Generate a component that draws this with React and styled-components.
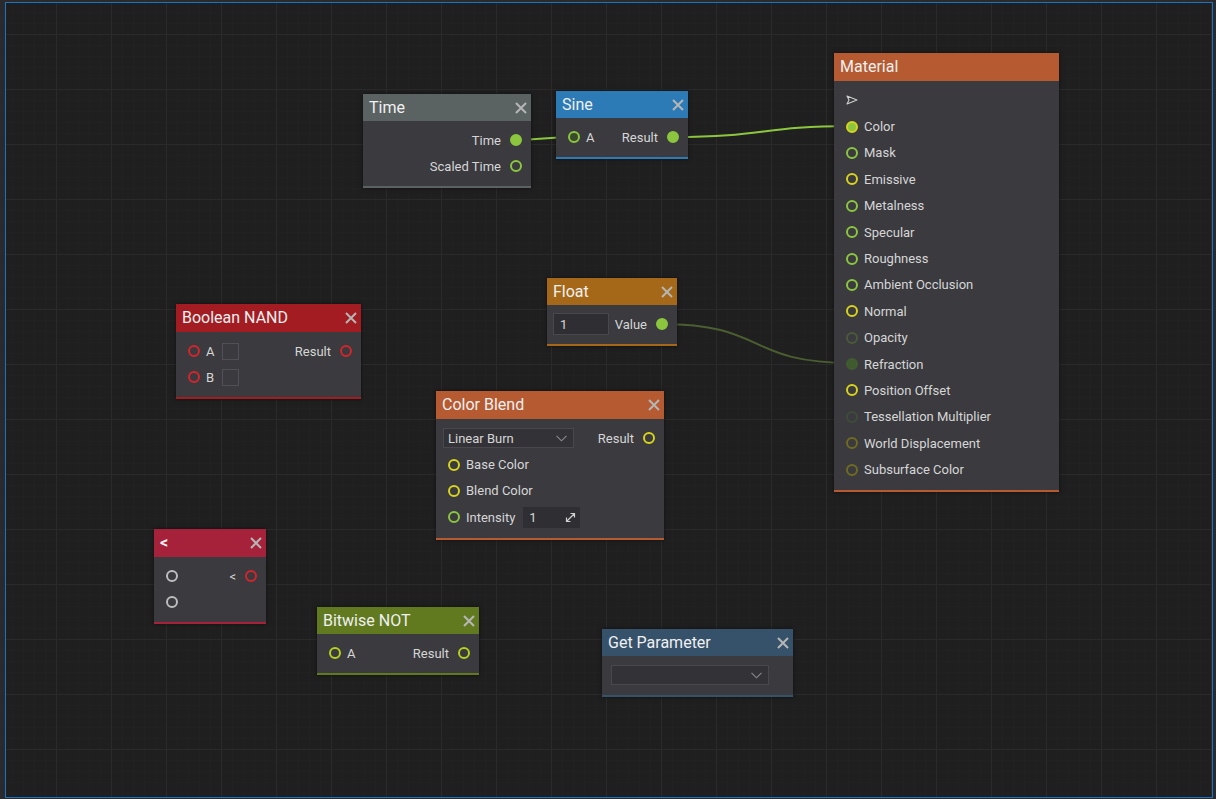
import React from "react";
import styled, { createGlobalStyle } from "styled-components";

const GlobalStyle = createGlobalStyle`
  html, body {
    margin: 0;
    padding: 0;
    background: #2a2a2c;
    font-family: Roboto, "Noto Sans", "Liberation Sans", sans-serif;
  }
  * { box-sizing: border-box; }
`;

const C = {
  green: "#8cc63e",
  yellow: "#d8d41c",
  red: "#d4252b",
  grey: "#bdbdbd",
  dimGreen: "#4a5a3a",
  darkGreen: "#3f5a2c",
  olive: "#6f6b20",
  text: "#d6d6d6",
  body: "#3a3a3f",
};

const Frame = styled.div`
  height: 799px;
  padding: 2px 3px 1px 5px;
`;

const Canvas = styled.div`
  position: relative;
  height: 100%;
  overflow: hidden;
  border: 1px solid #1d72c4;
  background-color: #1f1f20;
  background-image:
    linear-gradient(to right, #2a2a2b 1px, transparent 1px),
    linear-gradient(to bottom, #2a2a2b 1px, transparent 1px),
    linear-gradient(to right, rgba(255, 255, 255, 0.006) 1px, transparent 1px),
    linear-gradient(to bottom, rgba(255, 255, 255, 0.006) 1px, transparent 1px);
  background-size: 55px 55px, 55px 55px, 11px 11px, 11px 11px;
  background-position: 50px 31px, 50px 31px, 50px 31px, 50px 31px;
`;

const Wires = styled.svg`
  position: absolute;
  inset: 0;
  width: 100%;
  height: 100%;
  pointer-events: none;
`;

const Node = styled.div`
  position: absolute;
  left: ${(p) => p.$x}px;
  top: ${(p) => p.$y}px;
  width: ${(p) => p.$w}px;
  background: ${C.body};
  border-bottom: 2px solid ${(p) => p.$accent};
  box-shadow: 0 0 4px rgba(0, 0, 0, 0.55);
`;

const Header = styled.div`
  display: flex;
  align-items: center;
  justify-content: space-between;
  height: ${(p) => p.$h}px;
  padding: 0 4px 0 6px;
  background: ${(p) => p.$accent};
`;

const Title = styled.span`
  font-size: 16px;
  color: #f0f0f0;
  line-height: 1;
  font-weight: ${(p) => (p.$bold ? 700 : 400)};
`;

const CloseButton = styled.button`
  display: flex;
  align-items: center;
  justify-content: center;
  width: 12px;
  height: 12px;
  padding: 0;
  border: 0;
  background: none;
  color: #b6b6b6;
  cursor: pointer;
`;

const Body = styled.div`
  padding: 6px 0 7px;
`;

const Row = styled.div`
  display: flex;
  align-items: center;
  height: ${(p) => p.$h || 26}px;
  padding: 0 9px 0 ${(p) => (p.$pl != null ? p.$pl : 12)}px;
`;

const Port = styled.div`
  display: flex;
  align-items: center;
  gap: ${(p) => (p.$out ? 9 : 6)}px;
  margin-left: ${(p) => (p.$out ? "auto" : 0)};
`;

const Label = styled.span`
  font-size: 13px;
  color: ${C.text};
  white-space: nowrap;
`;

const Socket = styled.span`
  display: inline-block;
  flex: none;
  width: 12px;
  height: 12px;
  border-radius: 50%;
  border: 2px solid ${(p) => p.$ring};
  background: ${(p) => p.$fill || "transparent"};
`;

const Checkbox = styled.span`
  display: inline-block;
  width: 17px;
  height: 17px;
  margin-left: 2px;
  border: 1px solid #505056;
`;

const Select = styled.div`
  display: flex;
  align-items: center;
  justify-content: space-between;
  width: ${(p) => p.$w}px;
  height: 20px;
  padding: 0 6px 0 4px;
  background: #333337;
  border: 1px solid #48484d;
  font-size: 13px;
  color: ${C.text};
`;

const NumberBox = styled.div`
  display: flex;
  align-items: center;
  width: 56px;
  height: 22px;
  padding: 0 6px;
  margin-right: 4px;
  background: #2f2f33;
  border: 1px solid #48484d;
  font-size: 13px;
  color: ${C.text};
`;

const SliderBox = styled.div`
  display: flex;
  align-items: center;
  justify-content: space-between;
  width: 57px;
  height: 21px;
  margin-left: 2px;
  padding: 0 4px 0 6px;
  background: #2f2f33;
  font-size: 13px;
  color: ${C.text};
`;

const XIcon = () => (
  <svg width="12" height="12" viewBox="0 0 12 12">
    <path d="M1 1 L11 11 M11 1 L1 11" stroke="currentColor" strokeWidth="2" />
  </svg>
);

const Chevron = () => (
  <svg width="11" height="7" viewBox="0 0 11 7">
    <path d="M0.5 0.8 L5.5 5.8 L10.5 0.8" fill="none" stroke="#8a8a8e" strokeWidth="1.1" />
  </svg>
);

const ExpandIcon = () => (
  <svg width="11" height="11" viewBox="0 0 11 11" fill="none" stroke="#cfcfcf" strokeWidth="1.2">
    <path d="M1.5 9.5 L9.5 1.5 M5.5 1.5 H9.5 V5.5 M1.5 5.5 V9.5 H5.5" />
  </svg>
);

const PlayIcon = () => (
  <svg width="12" height="10" viewBox="0 0 12 10">
    <path d="M1 1 L11 5 L1 9 L3 5 Z" fill="none" stroke="#cfcfcf" strokeWidth="1.1" strokeLinejoin="round" />
  </svg>
);

const NodeFrame = ({ x, y, w, accent, title, bold, headerH = 27, closable = true, children }) => (
  <Node $x={x} $y={y} $w={w} $accent={accent}>
    <Header $accent={accent} $h={headerH}>
      <Title $bold={bold}>{title}</Title>
      {closable && (
        <CloseButton aria-label="Close">
          <XIcon />
        </CloseButton>
      )}
    </Header>
    <Body>{children}</Body>
  </Node>
);

const Input = ({ label, ring, fill, children }) => (
  <Port>
    <Socket $ring={ring} $fill={fill} />
    {label && <Label>{label}</Label>}
    {children}
  </Port>
);

const Output = ({ label, ring, fill }) => (
  <Port $out>
    {label && <Label>{label}</Label>}
    <Socket $ring={ring} $fill={fill} />
  </Port>
);

const materialInputs = [
  { label: "Color", ring: C.yellow, fill: C.green },
  { label: "Mask", ring: C.green },
  { label: "Emissive", ring: C.yellow },
  { label: "Metalness", ring: C.green },
  { label: "Specular", ring: C.green },
  { label: "Roughness", ring: C.green },
  { label: "Ambient Occlusion", ring: C.green },
  { label: "Normal", ring: C.yellow },
  { label: "Opacity", ring: C.dimGreen },
  { label: "Refraction", ring: "#435a33", fill: C.darkGreen },
  { label: "Position Offset", ring: C.yellow },
  { label: "Tessellation Multiplier", ring: "#3f4c3a" },
  { label: "World Displacement", ring: C.olive },
  { label: "Subsurface Color", ring: C.olive },
];

export default function App() {
  return (
    <>
      <GlobalStyle />
      <Frame>
        <Canvas>
          <Wires>
            <path d="M510 137 C 535 137, 540 134, 567 134" fill="none" stroke={C.green} strokeWidth="2" />
            <path d="M667 134 C 760 134, 755 123, 845 123" fill="none" stroke={C.green} strokeWidth="2" />
            <path d="M656 321 C 760 321, 740 360, 845 360" fill="none" stroke="#4b5e30" strokeWidth="2" />
          </Wires>

          <NodeFrame x={357} y={91} w={168} accent="#5a6262" title="Time">
            <Row>
              <Output label="Time" ring={C.green} fill={C.green} />
            </Row>
            <Row>
              <Output label="Scaled Time" ring={C.green} />
            </Row>
          </NodeFrame>

          <NodeFrame x={550} y={88} w={132} accent="#2c7bb6" title="Sine">
            <Row>
              <Input label="A" ring={C.green} fill="#3a4a2c" />
              <Output label="Result" ring={C.green} fill={C.green} />
            </Row>
          </NodeFrame>

          <NodeFrame x={828} y={50} w={225} accent="#b55a31" title="Material" headerH={28} closable={false}>
            <Row $h={26.4}>
              <PlayIcon />
            </Row>
            {materialInputs.map((m) => (
              <Row key={m.label} $h={26.4}>
                <Input label={m.label} ring={m.ring} fill={m.fill} />
              </Row>
            ))}
          </NodeFrame>

          <NodeFrame x={170} y={301} w={185} accent="#a31c22" title="Boolean NAND" headerH={28}>
            <Row>
              <Input label="A" ring={C.red}>
                <Checkbox />
              </Input>
              <Output label="Result" ring={C.red} />
            </Row>
            <Row>
              <Input label="B" ring={C.red}>
                <Checkbox />
              </Input>
            </Row>
          </NodeFrame>

          <NodeFrame x={541} y={275} w={130} accent="#a46818" title="Float">
            <Row $pl={6}>
              <NumberBox>1</NumberBox>
              <Output label="Value" ring={C.green} fill={C.green} />
            </Row>
          </NodeFrame>

          <NodeFrame x={430} y={388} w={228} accent="#b55a31" title="Color Blend" headerH={28}>
            <Row $pl={7} $h={26.4}>
              <Select $w={131}>
                <span>Linear Burn</span>
                <Chevron />
              </Select>
              <Output label="Result" ring={C.yellow} />
            </Row>
            <Row $h={26.4}>
              <Input label="Base Color" ring={C.yellow} />
            </Row>
            <Row $h={26.4}>
              <Input label="Blend Color" ring={C.yellow} />
            </Row>
            <Row $h={26.4}>
              <Input label="Intensity" ring={C.green}>
                <SliderBox>
                  <span>1</span>
                  <ExpandIcon />
                </SliderBox>
              </Input>
            </Row>
          </NodeFrame>

          <NodeFrame x={148} y={526} w={112} accent="#a6223a" title="<" bold headerH={28}>
            <Row>
              <Input ring={C.grey} />
              <Output label="<" ring={C.red} />
            </Row>
            <Row>
              <Input ring={C.grey} />
            </Row>
          </NodeFrame>

          <NodeFrame x={311} y={604} w={162} accent="#617a20" title="Bitwise NOT">
            <Row>
              <Input label="A" ring="#b5d11e" />
              <Output label="Result" ring="#b5d11e" />
            </Row>
          </NodeFrame>

          <NodeFrame x={596} y={626} w={191} accent="#36526a" title="Get Parameter">
            <Row $pl={9}>
              <Select $w={158}>
                <span />
                <Chevron />
              </Select>
            </Row>
          </NodeFrame>
        </Canvas>
      </Frame>
    </>
  );
}
